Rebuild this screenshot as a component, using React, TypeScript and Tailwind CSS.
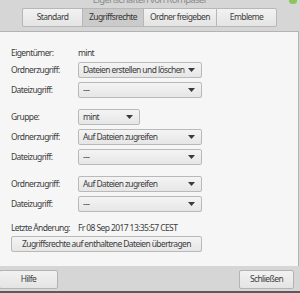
import React from "react";

const font = { fontFamily: '"Noto Sans", "Open Sans", sans-serif' };

function Arrow() {
  return (
    <svg width="7" height="4" viewBox="0 0 7 4" className="shrink-0">
      <path d="M0 0 H7 L3.5 4 Z" fill="#3a3a3a" />
    </svg>
  );
}

function Select({ text, w }: { text: string; w: string }) {
  return (
    <div
      className={`${w} h-[16px] flex items-center justify-between pl-[4px] pr-[6px] rounded-[2px] border border-[#b9b9b9] bg-gradient-to-b from-[#f4f4f4] to-[#e6e6e6] text-[#3c3c3c]`}
    >
      <span className="whitespace-nowrap leading-none">{text}</span>
      <Arrow />
    </div>
  );
}

function Row({
  label,
  children,
  mt,
}: {
  label: string;
  children: React.ReactNode;
  mt: string;
}) {
  return (
    <div className={`flex items-center h-[16px] ${mt}`}>
      <div className="w-[67px] shrink-0 text-[#3c3c3c] leading-none whitespace-nowrap">{label}</div>
      {children}
    </div>
  );
}

export default function App() {
  const tabs = [
    { t: "Standard", w: "w-[60px]", sel: false },
    { t: "Zugriffsrechte", w: "w-[61px]", sel: true },
    { t: "Ordner freigeben", w: "w-[73px]", sel: false },
    { t: "Embleme", w: "w-[61px]", sel: false },
  ];
  return (
    <div
      className="w-[300px] h-[293px] bg-[#d6d6d6] overflow-hidden flex flex-col text-[8.5px] tracking-[-0.6px] text-[#3c3c3c] relative"
      style={font}
    >
      {/* title strip */}
      <div className="h-[8px] overflow-hidden">
        <div className="-mt-[6px] text-center text-[9.5px] leading-[12px] text-[#8a8a8a] whitespace-nowrap">
          Eigenschaften von Rompaser
        </div>
      </div>
      <div className="absolute right-[3px] -top-[3px] w-[8px] h-[7px] rounded-full bg-[#8cc65a]" />

      {/* tabs */}
      <div className="flex pl-[22px] h-[19px]">
        {tabs.map((tab, i) => (
          <div
            key={tab.t}
            className={`${tab.w} h-full flex items-center justify-center border-y border-[#b7b7b7] ${
              i === 0 ? "border-l rounded-l-[2px]" : "border-l"
            } ${i === tabs.length - 1 ? "border-r rounded-r-[2px]" : ""} ${
              tab.sel
                ? "bg-[#cbcbcb] text-[#333]"
                : "bg-gradient-to-b from-[#f2f2f2] to-[#e4e4e4] text-[#3c3c3c]"
            }`}
          >
            <span className="leading-none whitespace-nowrap">{tab.t}</span>
          </div>
        ))}
      </div>

      {/* panel */}
      <div className="mt-[4px] w-[299px] h-[235px] border-t border-r border-[#b3b3b3] bg-[#f6f6f6] pl-[11px] flex flex-col">
        <Row label="Eigentümer:" mt="mt-[13px]">
          <span className="leading-none">mint</span>
        </Row>
        <Row label="Ordnerzugriff:" mt="mt-[1px]">
          <Select text="Dateien erstellen und löschen" w="w-[124px]" />
        </Row>
        <Row label="Dateizugriff:" mt="mt-[4px]">
          <Select text="---" w="w-[124px]" />
        </Row>
        <Row label="Gruppe:" mt="mt-[11px]">
          <Select text="mint" w="w-[62px]" />
        </Row>
        <Row label="Ordnerzugriff:" mt="mt-[4px]">
          <Select text="Auf Dateien zugreifen" w="w-[124px]" />
        </Row>
        <Row label="Dateizugriff:" mt="mt-[4px]">
          <Select text="---" w="w-[124px]" />
        </Row>
        <Row label="Ordnerzugriff:" mt="mt-[11px]">
          <Select text="Auf Dateien zugreifen" w="w-[124px]" />
        </Row>
        <Row label="Dateizugriff:" mt="mt-[4px]">
          <Select text="---" w="w-[124px]" />
        </Row>
        <div className="flex items-center h-[14px] mt-[9px]">
          <div className="w-[67px] shrink-0 leading-none whitespace-nowrap">Letzte Änderung:</div>
          <span className="leading-none whitespace-nowrap">Fr 08 Sep 2017 13:35:57 CEST</span>
        </div>
        <div className="mt-[1px] w-[191px] h-[16px] flex items-center justify-center rounded-[2px] border border-[#b9b9b9] bg-gradient-to-b from-[#f4f4f4] to-[#e6e6e6]">
          <span className="leading-none whitespace-nowrap">Zugriffsrechte auf enthaltene Dateien übertragen</span>
        </div>
      </div>

      {/* buttons */}
      <div className="mt-[4px] flex justify-between h-[19px]">
        <div className="-ml-px w-[59px] h-full flex items-center justify-center rounded-[2px] border border-[#b3b3b3] bg-gradient-to-b from-[#f2f2f2] to-[#e4e4e4]">
          <span className="leading-none">Hilfe</span>
        </div>
        <div className="mr-[6px] w-[55px] h-full flex items-center justify-center rounded-[2px] border border-[#b3b3b3] bg-gradient-to-b from-[#f2f2f2] to-[#e4e4e4]">
          <span className="leading-none">Schließen</span>
        </div>
      </div>
      <div className="mt-auto h-[2px] bg-[#5a5a5a]" />
    </div>
  );
}
